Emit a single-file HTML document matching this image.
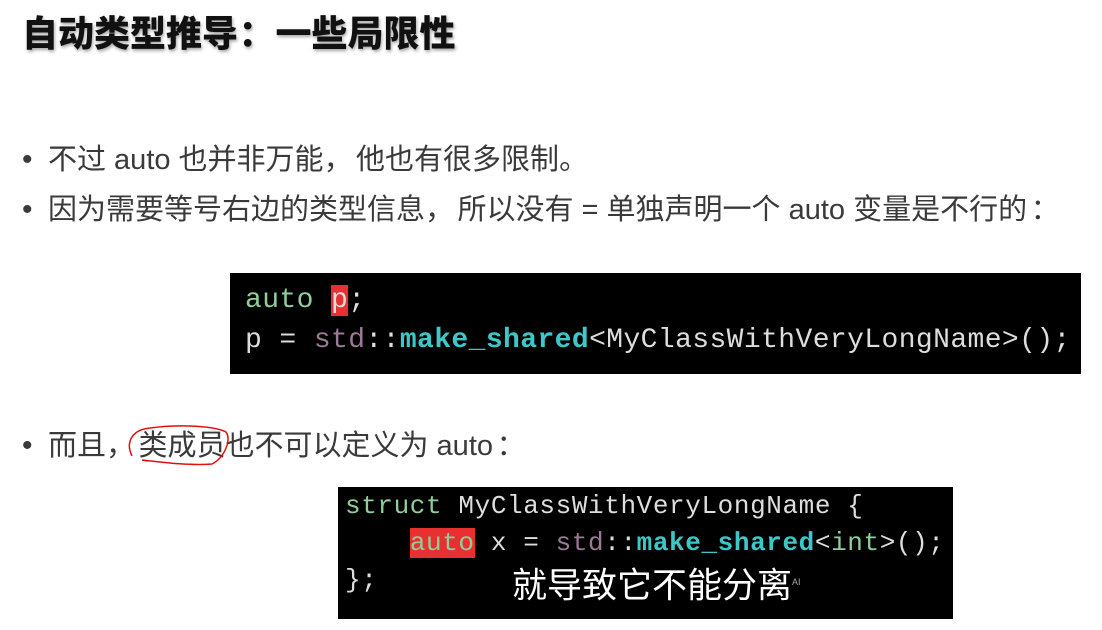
<!DOCTYPE html>
<html><head><meta charset="utf-8"><style>
body{margin:0;width:1102px;height:630px;background:#fff;position:relative;overflow:hidden;font-family:"Liberation Sans","Noto Sans CJK SC",sans-serif;}
.t{position:absolute;left:22px;top:5px;font-size:36px;font-weight:900;color:#111;text-shadow:1px 2px 3px rgba(0,0,0,.35);white-space:nowrap}
.b{position:absolute;left:22px;font-size:29px;color:#3a3a3a;white-space:nowrap;line-height:40px}
.b span.d{display:inline-block;width:26px;font-size:30px}
.cm{margin-right:.12em}
.cl{margin-left:.12em;margin-right:.12em}
.code{position:absolute;background:#000;font-family:"Liberation Mono",monospace;white-space:pre;color:#ddd}
.g{color:#8fce9a}.m{color:#9a7a94}.c{color:#3cc8c8;font-weight:bold}.hl{background:#e83030}
</style></head><body>
<div class="t">自动类型推导<span style="margin:0 .02em">：</span>一些局限性</div>
<div class="b" style="top:140px"><span class="d">•</span>不过 auto 也并非万能<span class="cm">，</span>他也有很多限制<span class="cm">。</span></div>
<div class="b" style="top:190px"><span class="d">•</span>因为需要等号右边的类型信息<span class="cm">，</span>所以没有 = 单独声明一个 auto 变量是不行的<span class="cl">：</span></div>
<div class="code" style="left:230px;top:273px;width:851px;height:101px;font-size:28px;letter-spacing:0.4px;line-height:40px">
<div style="position:absolute;top:8px;left:15px"><span class="g">auto</span> <span class="hl">p</span>;
p = <span class="m">std</span>::<span class="c">make_shared</span>&lt;MyClassWithVeryLongName&gt;();</div></div>
<div class="b" style="top:426px"><span class="d">•</span>而且<span class="cm">，</span>类成员也不可以定义为 auto<span class="cl">：</span></div>
<svg style="position:absolute;left:120px;top:420px" width="120" height="50"><path d="M12 36 C6 24 10 10 30 8 C60 4 95 6 106 12 C112 20 104 38 92 44 C70 46 40 42 22 40 L28 41" fill="none" stroke="#e01010" stroke-width="1.5"/></svg>
<div class="code" style="left:338px;top:487px;width:615px;height:132px;font-size:26px;letter-spacing:0.6px;line-height:37px">
<div style="position:absolute;top:1px;left:7px"><span class="g">struct</span> MyClassWithVeryLongName {
    <span class="hl g">auto</span> x = <span class="m">std</span>::<span class="c">make_shared</span>&lt;<span class="g">int</span>&gt;();
};</div>
<div style="position:absolute;left:174px;top:77px;font-family:'Liberation Sans','Noto Sans CJK SC',sans-serif;font-size:35px;color:#fff;letter-spacing:0">就导致它不能分离<sup style="font-size:9px;color:#aaa">AI</sup></div>
</div>
</body></html>
